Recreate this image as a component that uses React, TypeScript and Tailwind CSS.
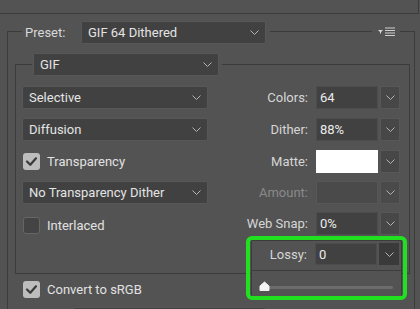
import React from "react";

const LINE = "border-[#3c3c3c]";

const Chevron = () => (
  <svg width="9" height="5" viewBox="0 0 9 5" className="shrink-0">
    <polyline points="0.5,0.5 4.5,4.5 8.5,0.5" fill="none" stroke="#b4b4b4" strokeWidth="1" />
  </svg>
);

const Check = () => (
  <svg width="17" height="17" viewBox="0 0 17 17">
    <polyline points="4,8.5 7.3,11.8 13,5.3" fill="none" stroke="#3a3a3a" strokeWidth="2.2" strokeLinecap="round" strokeLinejoin="round" />
  </svg>
);

function Dropdown({ text, className }: { text: string; className: string }) {
  return (
    <div
      className={
        "flex items-center justify-between h-[23px] pl-[6px] pr-[6px] bg-[#414141] border border-[#575757] rounded-[2px] text-[13px] text-[#e4e4e4] " +
        className
      }
    >
      <span className="leading-none">{text}</span>
      <Chevron />
    </div>
  );
}

function Field({
  label,
  value,
  disabled,
  white,
}: {
  label: string;
  value?: string;
  disabled?: boolean;
  white?: boolean;
}) {
  return (
    <div className="flex items-center">
      <span className={"text-[13px] leading-none mr-[8px] " + (disabled ? "text-[#8a8a8a]" : "text-[#d6d6d6]")}>{label}</span>
      <div
        className={
          "h-[23px] w-[62px] flex items-center pl-[3px] border text-[13px] text-[#ececec] " +
          (white
            ? "bg-[#ffffff] border-[#ffffff]"
            : disabled
            ? "bg-[#4a4a4a] border-[#575757]"
            : "bg-[#414141] border-[#4c4c4c]")
        }
      >
        <span className="leading-none">{value}</span>
      </div>
      <div
        className={
          "h-[23px] w-[20px] ml-[2px] flex items-center justify-center border " +
          (disabled ? "bg-[#4a4a4a] border-[#575757]" : "bg-[#474747] border-[#575757]")
        }
      >
        <Chevron />
      </div>
    </div>
  );
}

function CheckBox({ checked, text }: { checked: boolean; text: string }) {
  return (
    <div className="flex items-center">
      {checked ? (
        <div className="w-[17px] h-[17px] rounded-[3px] bg-[#bdbdbd]">
          <Check />
        </div>
      ) : (
        <div className="w-[17px] h-[17px] rounded-[3px] bg-[#444444] border border-[#666666]" />
      )}
      <span className="ml-[7px] text-[13px] leading-none text-[#e2e2e2]">{text}</span>
    </div>
  );
}

export default function App() {
  return (
    <div
      className="relative w-[420px] h-[309px] overflow-hidden bg-[#535353]"
      style={{ fontFamily: "Roboto, 'Noto Sans', sans-serif" }}
    >
      {/* previous panel fragment */}
      <div className={"w-[419px] h-[14px] border-b border-r " + LINE} />

      {/* Preset fieldset */}
      <div className={"ml-[7px] mt-[17px] w-[408px] h-[300px] border-t border-l border-r " + LINE}>
        <div className="flex items-center -mt-[11px] h-[23px]">
          <div className="ml-[14px] w-[59px] pl-[3px] bg-[#535353] h-[23px] flex items-center">
            <span className="text-[13px] leading-none text-[#d8d8d8]">Preset:</span>
          </div>
          <div className="pr-[4px] bg-[#535353]">
            <Dropdown text="GIF 64 Dithered" className="w-[185px]" />
          </div>
          <div className="flex-1" />
          <div className="w-[28px] h-[23px] bg-[#535353] flex items-center justify-center">
            <svg width="20" height="11" viewBox="0 0 20 11">
              <polygon points="2,3 7,3 4.5,5.5" fill="#d8d8d8" />
              <rect x="4" y="5" width="1" height="1.5" fill="#d8d8d8" />
              <rect x="9" y="0.5" width="10" height="1" fill="#cfcfcf" />
              <rect x="9" y="3" width="10" height="1" fill="#cfcfcf" />
              <rect x="9" y="5.5" width="10" height="1" fill="#cfcfcf" />
              <rect x="9" y="8" width="10" height="1" fill="#cfcfcf" />
            </svg>
          </div>
          <div className="w-[14px]" />
        </div>

        {/* GIF fieldset */}
        <div className={"ml-[7px] mt-[20px] w-[395px] h-[210px] border " + LINE}>
          <div className="flex items-center -mt-[12px] h-[23px]">
            <div className="ml-[16px] pl-[1px] pr-[3px] bg-[#535353]">
              <Dropdown text="GIF" className="w-[186px]" />
            </div>
          </div>

          <div className="flex flex-col pl-[6px] pr-[9px]">
            <div className="mt-[10px] h-[23px] flex items-center justify-between">
              <Dropdown text="Selective" className="w-[186px]" />
              <Field label="Colors:" value="64" />
            </div>
            <div className="mt-[9px] h-[23px] flex items-center justify-between">
              <Dropdown text="Diffusion" className="w-[186px]" />
              <Field label="Dither:" value="88%" />
            </div>
            <div className="mt-[9px] h-[23px] flex items-center justify-between">
              <div className="pl-[1px]">
                <CheckBox checked text="Transparency" />
              </div>
              <Field label="Matte:" white />
            </div>
            <div className="mt-[8px] h-[23px] flex items-center justify-between">
              <Dropdown text="No Transparency Dither" className="w-[186px]" />
              <Field label="Amount:" disabled />
            </div>
            <div className="mt-[8px] h-[23px] flex items-center justify-between">
              <div className="pl-[1px] pt-[3px]">
                <CheckBox checked={false} text="Interlaced" />
              </div>
              <Field label="Web Snap:" value="0%" />
            </div>
          </div>
        </div>

        <div className="ml-[15px] mt-[7px]">
          <CheckBox checked text="Convert to sRGB" />
        </div>
        <div className="ml-[65px] mt-[9px]">
          <Dropdown text="" className="w-[193px]" />
        </div>
      </div>

      {/* Lossy popup (overlay) */}
      <div className={"absolute left-[251px] top-[240px] w-[151px] h-[57px] bg-[#535353] border " + LINE}>
        <div className="mt-[2px] h-[22px] flex items-center justify-end pr-[2px]">
          <span className="text-[13px] leading-none mr-[8px] text-[#d6d6d6]">Lossy:</span>
          <div className="h-[22px] w-[62px] flex items-center pl-[3px] border bg-[#414141] border-[#4c4c4c] text-[13px] text-[#ececec]">
            <span className="leading-none">0</span>
          </div>
          <div className="h-[22px] w-[20px] ml-[2px] flex items-center justify-center bg-[#3a3a3a]">
            <Chevron />
          </div>
        </div>
        <div className={"mt-[5px] h-[26px] border-t pl-[6px] pt-[10px] " + LINE}>
          <svg width="136" height="10" viewBox="0 0 136 10">
            <rect x="2" y="5" width="133" height="3" rx="1.5" fill="#6c6c6c" />
            <path d="M6.5 1 L11 5 L11 9.5 L2 9.5 L2 5 Z" fill="#f4f4f4" stroke="#f4f4f4" strokeWidth="1" strokeLinejoin="round" />
          </svg>
        </div>
      </div>

      {/* Green highlight */}
      <div className="absolute left-[246px] top-[236px] w-[161px] h-[64px] border-[4px] border-[#20e020] rounded-[6px]" />
    </div>
  );
}
